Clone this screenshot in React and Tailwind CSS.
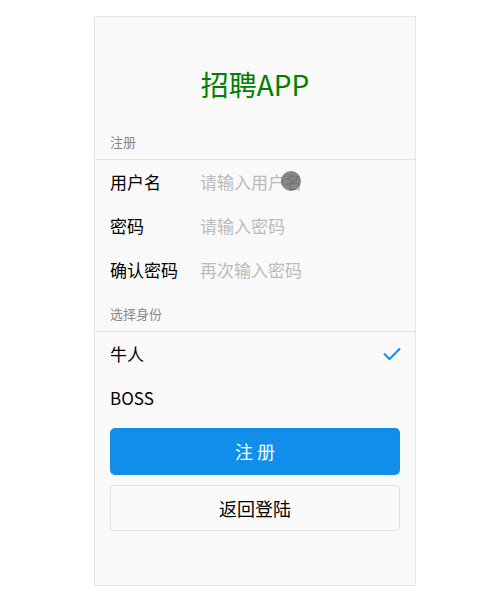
export default function App() {
  const font = { fontFamily: '"Noto Sans CJK SC", "Noto Sans", sans-serif' };
  return (
    <div className="min-h-[608px] w-[499px] bg-white pt-4 pl-[94px]" style={font}>
      <div className="flex h-[570px] w-[322px] flex-col border border-[#e5e5e5] bg-[#f9f9f9]">
        <div className="mt-[47px] text-center text-[28px] leading-[40px] text-[#008000]">招聘APP</div>
        <div className="mt-[29px] px-[15px] pb-[8px] text-[13px] leading-[18px] text-[#888]">注册</div>
        <div className="border-t border-[#e2e2e2]">
          <div className="flex h-[44px] items-center px-[15px]">
            <div className="w-[90px] text-[17px] leading-[24px] text-black">用户名</div>
            <div className="relative w-[101px] overflow-hidden whitespace-nowrap text-[17px] leading-[24px] text-[#bbb]">
              请输入用户名
              <span className="absolute right-0 top-[1px] h-[20px] w-[20px] rounded-full bg-[rgba(90,90,90,0.72)]"></span>
            </div>
          </div>
          <div className="flex h-[44px] items-center px-[15px]">
            <div className="w-[90px] text-[17px] leading-[24px] text-black">密码</div>
            <div className="text-[17px] leading-[24px] text-[#bbb]">请输入密码</div>
          </div>
          <div className="flex h-[44px] items-center px-[15px]">
            <div className="w-[90px] text-[17px] leading-[24px] text-black">确认密码</div>
            <div className="text-[17px] leading-[24px] text-[#bbb]">再次输入密码</div>
          </div>
        </div>
        <div className="mt-[13px] px-[15px] pb-[8px] text-[13px] leading-[18px] text-[#888]">选择身份</div>
        <div className="border-t border-[#e2e2e2]">
          <div className="flex h-[44px] items-center justify-between pl-[15px] pr-[14px]">
            <div className="text-[17px] leading-[24px] text-black">牛人</div>
            <svg width="18" height="14" viewBox="0 0 18 14" fill="none">
              <polyline points="1,6.5 6.5,12 17,1.5" stroke="#108ee9" strokeWidth="2" />
            </svg>
          </div>
          <div className="flex h-[44px] items-center px-[15px]">
            <div className="text-[17px] leading-[24px] text-black">BOSS</div>
          </div>
        </div>
        <div className="mx-[15px] mt-[8px] flex h-[47px] items-center justify-center rounded-[5px] bg-[#108ee9] text-[18px] text-white">
          注 册
        </div>
        <div className="mx-[15px] mt-[10px] flex h-[46px] items-center justify-center rounded-[4px] border border-[#e0e0e0] bg-[#fafafa] text-[18px] text-black">
          返回登陆
        </div>
      </div>
    </div>
  );
}
